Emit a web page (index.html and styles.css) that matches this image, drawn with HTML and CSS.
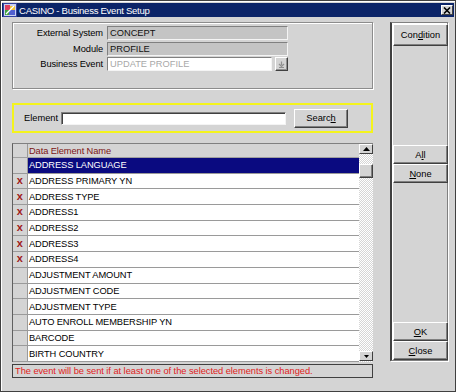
FILE: index.html
```html
<!DOCTYPE html>
<html>
<head>
<meta charset="utf-8">
<link rel="stylesheet" href="styles.css">
</head>
<body>
<div class="window">
  <div class="titlebar">
    <svg class="appicon" width="14" height="14" viewBox="0 0 14 14">
      <rect x="0.5" y="0.5" width="13" height="13" fill="#c8d0f0" stroke="#3040a0"/>
      <rect x="2" y="2" width="5" height="5" fill="#e04060"/>
      <rect x="7" y="3" width="5" height="4" fill="#f0c030"/>
      <rect x="2" y="7" width="4" height="5" fill="#40a040"/>
      <rect x="6" y="7" width="6" height="5" fill="#5060d0"/>
      <path d="M3 11 L11 3" stroke="#fff" stroke-width="1.2"/>
    </svg>
    <span class="title">CASINO - Business Event Setup</span>
    <span class="closebtn">
      <svg width="8" height="7" viewBox="0 0 8 7"><path d="M1 0.5 L7 6.5 M7 0.5 L1 6.5" stroke="#000" stroke-width="1.6"/></svg>
    </span>
  </div>
  <div class="main">
    <div class="leftcol">
      <div class="groupbox">
        <div class="formgrid">
          <div class="lbl">External System</div>
          <div class="field ro">CONCEPT</div>
          <div class="lbl">Module</div>
          <div class="field ro">PROFILE</div>
          <div class="lbl">Business Event</div>
          <div class="combo">
            <div class="field dis">UPDATE PROFILE</div>
            <div class="dropbtn"><svg width="7" height="7" viewBox="0 0 7 7"><path d="M3.5 0.5 V4 M1 3 L3.5 5.5 L6 3" stroke="#909090" fill="none" stroke-width="1.2"/><path d="M1 6.5 H6" stroke="#909090"/></svg></div>
          </div>
        </div>
      </div>
      <div class="searchbox">
        <span class="elbl">Element</span>
        <div class="input"></div>
        <button class="btn search">Searc<u>h</u></button>
      </div>
      <div class="table">
        <div class="tdata">
          <div class="thead">
            <div class="mark"></div>
            <div class="name hdr">Data Element Name</div>
          </div>
          <div class="tbody">
            <div class="row sel"><div class="mark"></div><div class="name">ADDRESS LANGUAGE</div></div>
            <div class="row"><div class="mark"><span class="x">x</span></div><div class="name">ADDRESS PRIMARY YN</div></div>
            <div class="row"><div class="mark"><span class="x">x</span></div><div class="name">ADDRESS TYPE</div></div>
            <div class="row"><div class="mark"><span class="x">x</span></div><div class="name">ADDRESS1</div></div>
            <div class="row"><div class="mark"><span class="x">x</span></div><div class="name">ADDRESS2</div></div>
            <div class="row"><div class="mark"><span class="x">x</span></div><div class="name">ADDRESS3</div></div>
            <div class="row"><div class="mark"><span class="x">x</span></div><div class="name">ADDRESS4</div></div>
            <div class="row"><div class="mark"></div><div class="name">ADJUSTMENT AMOUNT</div></div>
            <div class="row"><div class="mark"></div><div class="name">ADJUSTMENT CODE</div></div>
            <div class="row"><div class="mark"></div><div class="name">ADJUSTMENT TYPE</div></div>
            <div class="row"><div class="mark"></div><div class="name">AUTO ENROLL MEMBERSHIP YN</div></div>
            <div class="row"><div class="mark"></div><div class="name">BARCODE</div></div>
            <div class="row"><div class="mark"></div><div class="name">BIRTH COUNTRY</div></div>
          </div>
        </div>
        <div class="vscroll">
          <div class="sbtn up"><svg width="7" height="4" viewBox="0 0 7 4"><path d="M0 4 L3.5 0 L7 4 Z" fill="#000"/></svg></div>
          <div class="track">
            <div class="thumb"></div>
            <div class="spacer"></div>
          </div>
          <div class="sbtn down"><svg width="5" height="3" viewBox="0 0 5 3"><path d="M0 0 L2.5 3 L5 0 Z" fill="#000"/></svg></div>
        </div>
      </div>
      <div class="message">The event will be sent if at least one of the selected elements is changed.</div>
    </div>
    <div class="rightpanel">
      <button class="btn pbtn cond">Con<u>d</u>ition</button>
      <button class="btn pbtn all">A<u>l</u>l</button>
      <button class="btn pbtn"><u>N</u>one</button>
      <button class="btn pbtn ok"><u>O</u>K</button>
      <button class="btn pbtn"><u>C</u>lose</button>
    </div>
  </div>
</div>
</body>
</html>
```

FILE: styles.css
```css
* { box-sizing: border-box; }
html, body { margin: 0; padding: 0; background: #d4d4d4; }
body {
  font-family: "Liberation Sans", Arial, sans-serif;
  font-size: 9.3px;
  color: #000;
}
.window {
  width: 456px;
  height: 392px;
  border: 1px solid #404040;
  padding: 2px 1px 0 1px;
  background: #d4d4d4;
  box-shadow: inset 1px 1px 0 #fff;
}
.titlebar {
  height: 14px;
  background: #0b2468;
  display: flex;
  align-items: center;
  color: #fff;
  padding-left: 1px;
}
.appicon { flex: none; }
.title {
  margin-left: 2px;
  font-size: 9.6px;
  letter-spacing: -0.3px;
  flex: 1;
}
.closebtn {
  width: 12px;
  height: 10px;
  background: #d4d4d4;
  border: 1px solid;
  border-color: #fff #404040 #404040 #fff;
  display: flex;
  align-items: center;
  justify-content: center;
  margin-right: 1px;
}
.main {
  display: flex;
  padding: 5px 7px 0 10px;
  gap: 17px;
}
.leftcol {
  width: 361px;
  display: flex;
  flex-direction: column;
}
.groupbox {
  height: 67px;
  border: 1px solid #8c8c8c;
  box-shadow: inset 1px 1px 0 #fff, 1px 1px 0 #fff;
  padding: 3px 0 0 0;
}
.formgrid {
  display: grid;
  grid-template-columns: 90px 181px;
  grid-auto-rows: 14px;
  column-gap: 4px;
  row-gap: 1.5px;
}
.lbl {
  text-align: right;
  line-height: 14px;
  white-space: nowrap;
  letter-spacing: -0.1px;
}
.field {
  height: 14px;
  line-height: 12px;
  padding-left: 2px;
  border: 1px solid;
  border-color: #808080 #f4f4f4 #f4f4f4 #808080;
  white-space: nowrap;
  overflow: hidden;
}
.field.ro { background: #c4c4c4; color: #101010; }
.field.dis { background: #fff; color: #a8a8a8; width: 165px; }
.combo { display: flex; gap: 3px; }
.dropbtn {
  width: 13px;
  height: 14px;
  border: 1px solid;
  border-color: #fff #404040 #404040 #fff;
  box-shadow: inset -1px -1px 0 #909090;
  display: flex;
  align-items: center;
  justify-content: center;
}
.searchbox {
  margin-top: 14px;
  height: 30px;
  border: 2px solid #f4f41c;
  display: flex;
  align-items: center;
  padding-left: 10px;
}
.elbl { width: 37px; }
.input {
  width: 225px;
  height: 13px;
  background: #fff;
  border: 1px solid;
  border-color: #808080 #f4f4f4 #f4f4f4 #808080;
  box-shadow: inset 1px 1px 0 #404040;
}
.btn {
  font-family: inherit;
  font-size: 9.3px;
  background: #d4d4d4;
  color: #000;
  border: 1px solid;
  border-color: #fff #404040 #404040 #fff;
  box-shadow: inset -1px -1px 0 #808080;
  padding: 0;
  margin: 0;
  text-align: center;
}
.btn u { text-decoration-thickness: 1px; text-underline-offset: 1px; }
.search {
  width: 54px;
  height: 19px;
  margin-left: 8px;
}
.table {
  margin-top: 10px;
  height: 219px;
  display: flex;
  border-left: 1px solid #606060;
  border-top: 1px solid #808080;
}
.tdata {
  width: 346px;
  display: flex;
  flex-direction: column;
}
.thead {
  height: 14px;
  display: flex;
  border-bottom: 1px solid #a0a0a0;
}
.tbody {
  flex: 1;
  display: flex;
  flex-direction: column;
}
.row {
  flex: 1 1 0;
  display: flex;
  border-bottom: 1px solid #9a9a9a;
}
.mark {
  width: 15px;
  flex: none;
  background: #d4d4d4;
  border-right: 1px solid #9a9a9a;
  display: flex;
  align-items: center;
  justify-content: center;
}
.name {
  flex: 1;
  background: #fff;
  padding-left: 1px;
  display: flex;
  align-items: center;
  white-space: nowrap;
  letter-spacing: -0.1px;
}
.name.hdr { background: #d4d4d4; color: #7c1414; }
.row.sel .name { background: #0a0a80; color: #fff; }
.x {
  color: #a01818;
  font-weight: bold;
  font-size: 10px;
  line-height: 10px;
  transform: scaleX(1.1);
}
.vscroll {
  width: 14px;
  display: flex;
  flex-direction: column;
  background: repeating-conic-gradient(#ffffff 0 25%, #d6d6d6 0 50%) 0 0 / 2px 2px;
}
.sbtn {
  height: 10px;
  background: #d4d4d4;
  border: 1px solid;
  border-color: #fff #404040 #404040 #fff;
  display: flex;
  align-items: center;
  justify-content: center;
}
.track { flex: 1; display: flex; flex-direction: column; padding-top: 10px; }
.thumb {
  height: 14px;
  background: #d4d4d4;
  border: 1px solid;
  border-color: #fff #404040 #404040 #fff;
  box-shadow: inset -1px -1px 0 #808080;
}
.sbtn.down { margin-bottom: 1px; }
.message {
  margin-top: 2px;
  height: 14px;
  border: 1px solid #404040;
  color: #e01c1c;
  padding-left: 2px;
  line-height: 12px;
  white-space: nowrap;
  overflow: hidden;
  letter-spacing: -0.05px;
}
.rightpanel {
  width: 58px;
  height: 339px;
  display: flex;
  flex-direction: column;
  border: 1px solid #808080;
  border-left: 2px solid #404040;
  box-shadow: inset 1px 1px 0 #fff, 1px 1px 0 #fff;
  padding: 1px 0 0 1px;
}
.pbtn {
  width: 55px;
  height: 19px;
}
.pbtn.cond { height: 22px; }
.pbtn.all { margin-top: 99px; }
.pbtn.ok { margin-top: auto; }
```
